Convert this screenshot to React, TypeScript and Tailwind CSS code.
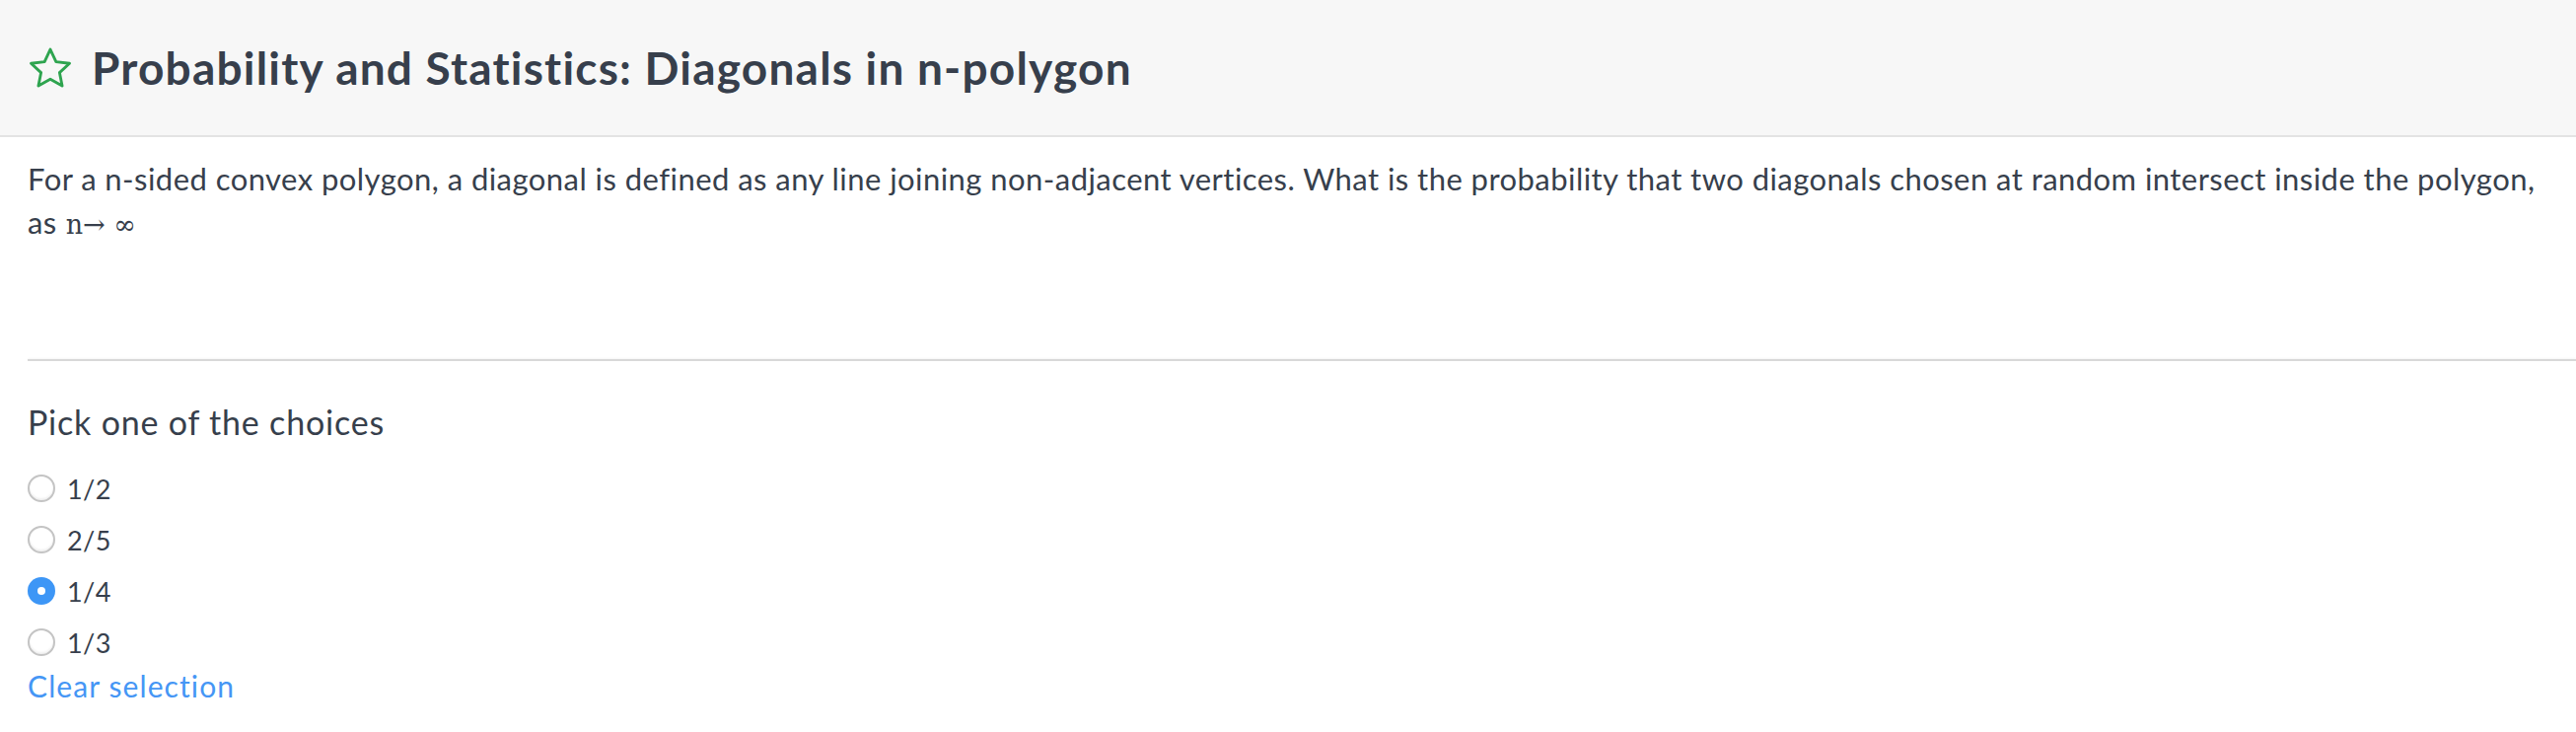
import { useState } from "react";

const choices = ["1/2", "2/5", "1/4", "1/3"];

const StarIcon = () => (
	<svg width="46" height="44" viewBox="0 0 24 23" fill="none">
		<path
			d="M12 1.6l3.05 6.55 7.15.85-5.3 4.9 1.4 7.05L12 17.4l-6.3 3.55 1.4-7.05-5.3-4.9 7.15-.85z"
			stroke="#2ea44f"
			strokeWidth="1.5"
			strokeLinejoin="round"
		/>
	</svg>
);

const Radio = ({ checked }: { checked: boolean }) =>
	checked ? (
		<span className="flex h-[28px] w-[28px] items-center justify-center rounded-full bg-[#3d96f6]">
			<span className="h-[8px] w-[8px] rounded-full bg-white" />
		</span>
	) : (
		<span className="h-[28px] w-[28px] rounded-full border-2 border-[#c4c4c4] bg-white shadow-[inset_0_-2px_2px_rgba(0,0,0,0.06)]" />
	);

const App = () => {
	const [selected, setSelected] = useState<number | null>(2);

	return (
		<div className="min-h-screen bg-white font-['Lato',sans-serif] text-[#373f4c]">
			<div className="flex h-[139px] items-center gap-[19px] border-b-2 border-[#e3e3e3] bg-[#f7f7f7] pl-[28px]">
				<StarIcon />
				<h1 className="text-[46px] font-bold leading-none tracking-[1.2px]">
					Probability and Statistics: Diagonals in n-polygon
				</h1>
			</div>

			<div className="pl-[28px] pr-[10px] pt-[20px]">
				<p className="h-[205px] text-[31px] leading-[44px] tracking-[0.45px]">
					For a n-sided convex polygon, a diagonal is defined as any line
					joining non-adjacent vertices. What is the probability that two
					diagonals chosen at random intersect inside the polygon, as
					<span className="ml-[9px] inline-block font-['DejaVu_Serif',serif] text-[27px] leading-[30px] tracking-normal">
						n→ ∞
					</span>
				</p>
			</div>

			<div className="ml-[28px] h-[2px] bg-[#d8d8d8] shadow-[0_-1px_2px_rgba(0,0,0,0.04)]" />

			<div className="pl-[28px] pt-[42px]">
				<h2 className="text-[34px] leading-[40px] tracking-[0.8px]">
					Pick one of the choices
				</h2>
				<div className="mt-[21px] flex flex-col">
					{choices.map((c, i) => (
						<label
							key={c}
							className="flex h-[52px] cursor-pointer items-center gap-[12px]"
							onClick={() => setSelected(i)}
						>
							<Radio checked={selected === i} />
							<span className="text-[27px] leading-none tracking-[0.4px]">{c}</span>
						</label>
					))}
				</div>
				<button
					className="mt-[0px] text-[30px] leading-[36px] tracking-[1.1px] text-[#4596f5]"
					onClick={() => setSelected(null)}
				>
					Clear selection
				</button>
			</div>
		</div>
	);
};

export default App;
